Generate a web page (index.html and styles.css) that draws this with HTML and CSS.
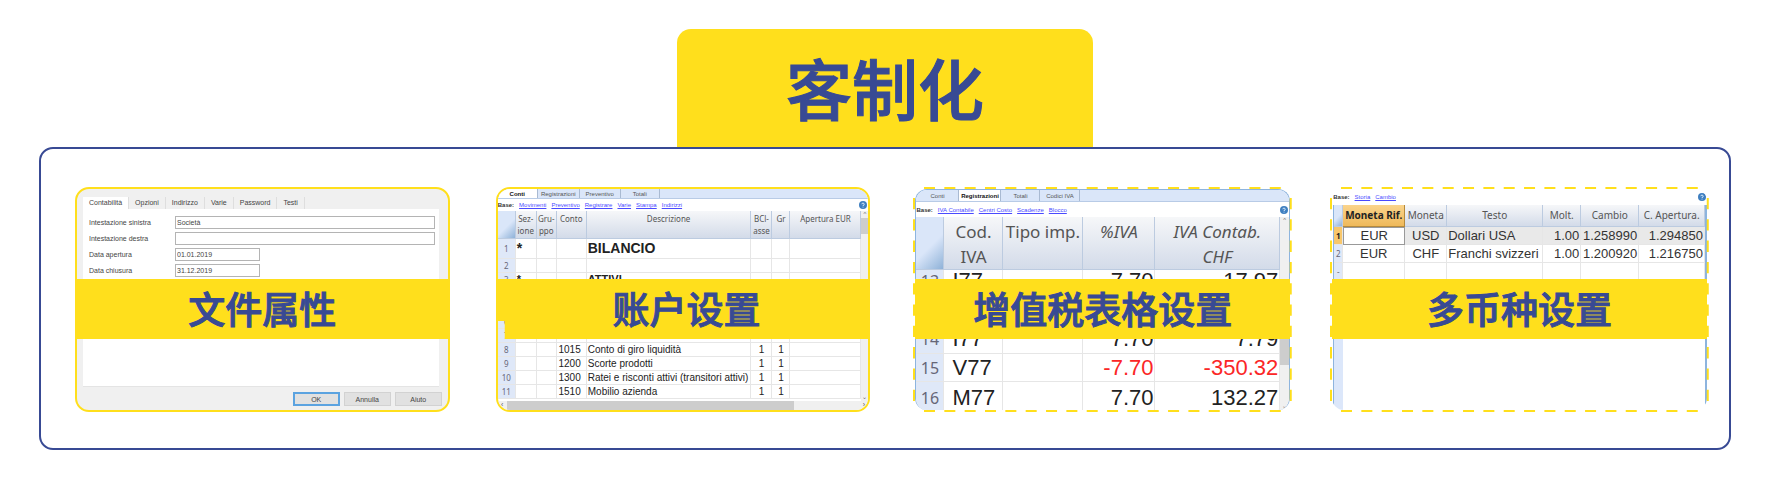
FILE: index.html
```
<!DOCTYPE html>
<html lang="zh-CN">
<head>
<meta charset="utf-8">
<meta name="viewport" content="width=device-width, initial-scale=1">
<title>客制化</title>
<link rel="stylesheet" href="styles.css">
</head>
<body>
<main class="page">
  <h1 class="title">客制化</h1>
  <div class="frame">

    <section class="card card--solid card--first">
      <div class="shot dialog">
        <nav class="dialog-tabs">
          <button class="dtab dtab--on" type="button">Contabilità</button>
          <button class="dtab" type="button">Opzioni</button>
          <button class="dtab" type="button">Indirizzo</button>
          <button class="dtab" type="button">Varie</button>
          <button class="dtab" type="button">Password</button>
          <button class="dtab" type="button">Testi</button>
        </nav>
        <form class="dialog-panel">
          <div class="field"><label for="f1">Intestazione sinistra</label><input id="f1" type="text" value="Società"></div>
          <div class="field"><label for="f2">Intestazione destra</label><input id="f2" type="text"></div>
          <div class="field field--short"><label for="f3">Data apertura</label><input id="f3" type="text" value="01.01.2019"></div>
          <div class="field field--short"><label for="f4">Data chiusura</label><input id="f4" type="text" value="31.12.2019"></div>
        </form>
        <div class="dialog-actions">
          <button class="btn btn--main" type="button">OK</button>
          <button class="btn" type="button">Annulla</button>
          <button class="btn" type="button">Aiuto</button>
        </div>
      </div>
      <h2 class="band">文件属性</h2>
    </section>

    <section class="card card--solid card--second">
      <div class="shot app">
        <nav class="tabs tabs--accounts">
          <button class="tab tab--on" type="button">Conti</button>
          <button class="tab" type="button">Registrazioni</button>
          <button class="tab" type="button">Preventivo</button>
          <button class="tab" type="button">Totali</button>
        </nav>
        <div class="links links--short">
          <b>Base:</b><a href="#">Movimenti</a><a href="#">Preventivo</a><a href="#">Registrare</a><a href="#">Varie</a><a href="#">Stampa</a><a href="#">Indirizzi</a>
          <svg class="help" viewBox="0 0 8 8"><circle cx="4" cy="4" r="4" fill="#3f7fc0"/><path d="M2.8 3.2a1.2 1.2 0 1 1 1.2 1.3v.6M4 5.8v.7" fill="none" stroke="#d8ebfa"/></svg>
        </div>
        <div class="sheet">
          <table class="grid accounts">
            <colgroup><col class="a0"><col class="a1"><col class="a2"><col class="a3"><col><col class="a5"><col class="a6"><col class="a7"></colgroup>
            <thead><tr><th class="corner"></th><th>Sez-<br>ione</th><th>Gru-<br>ppo</th><th>Conto</th><th>Descrizione</th><th>BCl-<br>asse</th><th>Gr</th><th>Apertura EUR</th></tr></thead>
            <tbody>
              <tr class="big"><th>1</th><td>*</td><td></td><td></td><td>BILANCIO</td><td></td><td></td><td></td></tr>
              <tr><th>2</th><td></td><td></td><td></td><td></td><td></td><td></td><td></td></tr>
              <tr class="strong"><th>3</th><td>*</td><td></td><td></td><td>ATTIVI</td><td></td><td></td><td></td></tr>
              <tr><th></th><td></td><td></td><td></td><td></td><td></td><td></td><td></td></tr>
              <tr><th></th><td></td><td></td><td></td><td></td><td></td><td></td><td></td></tr>
              <tr><th>6</th><td></td><td></td><td></td><td></td><td></td><td></td><td></td></tr>
              <tr><th>7</th><td></td><td></td><td class="num">1010</td><td>C/c bancario</td><td class="mid">1</td><td class="mid">1</td><td class="num">3'400.00</td></tr>
              <tr><th>8</th><td></td><td></td><td class="num">1015</td><td>Conto di giro liquidità</td><td class="mid">1</td><td class="mid">1</td><td></td></tr>
              <tr><th>9</th><td></td><td></td><td class="num">1200</td><td>Scorte prodotti</td><td class="mid">1</td><td class="mid">1</td><td></td></tr>
              <tr><th>10</th><td></td><td></td><td class="num">1300</td><td>Ratei e risconti attivi (transitori attivi)</td><td class="mid">1</td><td class="mid">1</td><td></td></tr>
              <tr><th>11</th><td></td><td></td><td class="num">1510</td><td>Mobilio azienda</td><td class="mid">1</td><td class="mid">1</td><td></td></tr>
            </tbody>
          </table>
          <div class="vbar"><span>^</span><i></i><span class="vbar-end">⌄</span></div>
        </div>
        <div class="hbar"><span>‹</span><i></i><span class="hbar-end">›</span></div>
      </div>
      <h2 class="band band--notch">账户设置</h2>
    </section>

    <section class="card card--dashed">
      <div class="shot app app--blue">
        <nav class="tabs tabs--vat">
          <button class="tab" type="button">Conti</button>
          <button class="tab tab--on" type="button">Registrazioni</button>
          <button class="tab" type="button">Totali</button>
          <button class="tab" type="button">Codici IVA</button>
        </nav>
        <div class="links links--tall">
          <b>Base:</b><a href="#">IVA Contabile</a><a href="#">Centri Costo</a><a href="#">Scadenze</a><a href="#">Blocco</a>
          <svg class="help" viewBox="0 0 8 8"><circle cx="4" cy="4" r="4" fill="#3f7fc0"/><path d="M2.8 3.2a1.2 1.2 0 1 1 1.2 1.3v.6M4 5.8v.7" fill="none" stroke="#d8ebfa"/></svg>
        </div>
        <div class="sheet">
          <table class="grid vat">
            <colgroup><col class="v0"><col class="v1"><col class="v2"><col class="v3"><col></colgroup>
            <thead><tr><th class="corner"></th><th>Cod.<br>IVA</th><th>Tipo imp.</th><th><em>%IVA</em></th><th><em>IVA Contab.<br>CHF</em></th></tr></thead>
            <tbody>
              <tr class="row-top"><th>13</th><td>I77</td><td></td><td class="num">7.70</td><td class="num">17.97</td></tr>
              <tr class="row-bottom"><th>14</th><td>I77</td><td></td><td class="num">7.70</td><td class="num">7.79</td></tr>
              <tr><th>15</th><td>V77</td><td></td><td class="num neg">-7.70</td><td class="num neg">-350.32</td></tr>
              <tr class="row-last"><th>16</th><td>M77</td><td></td><td class="num">7.70</td><td class="num">132.27</td></tr>
            </tbody>
          </table>
          <div class="vbar vbar--low"><span>^</span><i></i><span class="vbar-end">⌄</span></div>
        </div>
      </div>
      <svg class="dashes" viewBox="0 0 379 225" preserveAspectRatio="none">
        <path d="M11 1H368" pathLength="1070"/><path d="M11 224H368" pathLength="1070"/>
        <path class="side" d="M1 11V214" pathLength="610"/><path class="side" d="M378 11V214" pathLength="610"/>
      </svg>
      <h2 class="band">增值税表格设置</h2>
    </section>

    <section class="card card--dashed">
      <div class="shot app app--currency">
        <div class="links">
          <b>Base:</b><a href="#">Storia</a><a href="#">Cambio</a>
          <svg class="help" viewBox="0 0 8 8"><circle cx="4" cy="4" r="4" fill="#3f7fc0"/><path d="M2.8 3.2a1.2 1.2 0 1 1 1.2 1.3v.6M4 5.8v.7" fill="none" stroke="#d8ebfa"/></svg>
        </div>
        <div class="sheet sheet--sides">
          <table class="grid currency">
            <colgroup><col class="c0"><col class="c1"><col class="c2"><col class="c3"><col class="c4"><col class="c5"><col></colgroup>
            <thead><tr><th class="corner"></th><th class="picked">Moneta Rif.</th><th>Moneta</th><th>Testo</th><th>Molt.</th><th>Cambio</th><th>C. Apertura.</th></tr></thead>
            <tbody>
              <tr class="current"><th>1</th><td class="mid cell-on">EUR</td><td class="mid">USD</td><td>Dollari USA</td><td class="num">1.00</td><td class="num">1.258990</td><td class="num">1.294850</td></tr>
              <tr><th>2</th><td class="mid">EUR</td><td class="mid">CHF</td><td>Franchi svizzeri</td><td class="num">1.00</td><td class="num">1.200920</td><td class="num">1.216750</td></tr>
              <tr><th>-</th><td></td><td></td><td></td><td></td><td></td><td></td></tr>
            </tbody>
          </table>
        </div>
      </div>
      <svg class="dashes" viewBox="0 0 379 225" preserveAspectRatio="none">
        <path d="M11 1H368" pathLength="1070"/><path d="M11 224H368" pathLength="1070"/>
        <path class="side" d="M1 11V214" pathLength="610"/><path class="side" d="M378 11V214" pathLength="610"/>
      </svg>
      <h2 class="band">多币种设置</h2>
    </section>

  </div>
</main>
</body>
</html>
```

FILE: styles.css
```
:root {
  --yellow: #ffdf1c;
  --blue: #384a94;
  --sans: "Liberation Sans", "Noto Sans CJK SC", sans-serif;
  --ui: "Noto Sans", "Noto Sans CJK SC", sans-serif;
}
* { box-sizing: border-box; }
body { margin: 0; background: #fff; font-family: var(--sans); color: #222; }
button, input { font: inherit; color: inherit; margin: 0; padding: 0; border: 0; background: none; }

.page { padding: 29px 39px 28px; }
.title {
  width: 416px; max-width: 100%; height: 118px; margin: 0 auto;
  border-radius: 14px 14px 0 0; background: var(--yellow); color: var(--blue);
  font: 500 66px/114px "Noto Sans CJK SC", sans-serif; text-align: center;
  -webkit-text-stroke: 1px var(--blue);
}
.frame {
  display: grid; grid-template-columns: 383fr 380fr 379fr 379fr; column-gap: 38px;
  padding: 38px 20px 36px 34px; border: 2px solid var(--blue); border-radius: 14px;
}

.card { position: relative; height: 225px; }
.card--first { margin-right: 8px; }
.card--second { margin-right: 5px; }
.shot { height: 100%; overflow: hidden; display: flex; flex-direction: column; }
.card--solid .shot { border: 2px solid var(--yellow); border-radius: 14px; }
.card--dashed { padding: 2px; }
.card--dashed .shot { border-radius: 12px; }
.dashes { position: absolute; inset: 0; width: 100%; height: 100%; fill: none; stroke: var(--yellow); stroke-width: 2; stroke-dasharray: 33 28; pointer-events: none; }
.dashes .side { stroke-dasharray: 34 30; }

.band {
  position: absolute; left: 0; right: 0; top: 92px; height: 60px; margin: 0;
  background: var(--yellow); color: var(--blue);
  font: 500 37px/58px "Noto Sans CJK SC", sans-serif; text-align: center;
  -webkit-text-stroke: 1px var(--blue);
}
.card--dashed .band { left: 2px; right: 2px; }
.band--notch { padding-left: 7px; clip-path: polygon(0 0, 100% 0, 100% 100%, 9px 100%, 9px 42px, 0 42px); }

/* file properties dialog */
.dialog { background: #f0f0f0; padding: 8px 6px 4px 6px; font-size: 7px; color: #444; }
.dialog-tabs { display: flex; height: 12px; }
.dtab { padding: 0 6px; border-right: 1px solid #dedede; line-height: 12px; }
.dtab--on { background: #fff; }
.dialog-panel { flex: 1; background: #fff; margin-right: 3px; padding: 7px 4px 0 6px; border-bottom: 1px solid #e4e4e4; }
.field { display: grid; grid-template-columns: 86px 1fr; align-items: center; margin-bottom: 3px; }
.field input { width: 100%; height: 13px; padding-left: 1px; border: 1px solid #b4b4b4; background: #fff; }
.field--short input { width: 85px; }
.dialog-actions { display: flex; justify-content: flex-end; gap: 4px; padding-top: 5px; }
.btn { width: 47px; height: 14px; background: #e1e1e1; border: 1px solid #d2d2d2; }
.btn--main { border: 2px solid #5ba3e0; }

/* spreadsheet window */
.app { background: #fff; }
.tabs { display: grid; background: #dae6f9; border-bottom: 1px solid #b8cbe6; font-size: 6px; line-height: 8px; color: #555; }
.tabs--accounts { grid-template-columns: 40px 42px 41px 39px; height: 10px; }
.tabs--vat { grid-template-columns: 43px 42px 39px 40px; height: 12px; }
.tab { border-right: 1px solid #a9bad2; text-align: center; }
.tab--on { background: #fff; color: #111; font-weight: 700; }
.links { display: flex; align-items: center; gap: 5px; height: 13px; font-size: 6px; color: #333; }
.links--short { height: 12px; }
.links--tall { height: 15px; }
.links a { color: #4a4aff; }
.help { width: 8px; height: 8px; margin-left: auto; margin-right: 1px; }
.sheet { flex: 1; display: flex; min-height: 0; overflow: hidden; }
.sheet .grid { flex: 1; min-width: 0; }

.grid { border-collapse: separate; border-spacing: 0; table-layout: fixed; width: 100%; }
.grid th, .grid td { padding: 0 1px; border-right: 1px solid #e6e6e6; border-bottom: 1px solid #e6e6e6; white-space: nowrap; overflow: hidden; text-align: left; }
.grid thead th { padding: 0; vertical-align: top; text-align: center; font-family: var(--ui); font-weight: 400; color: #555; background: linear-gradient(#f6f7f9, #d3dbe9); border-color: #bccbe0; }
.grid thead .corner { background: linear-gradient(135deg, #dae6f9 55%, #8fb2d8); }
.grid tbody th { background: #dfe8f8; color: #667; font-family: var(--ui); font-weight: 400; text-align: center; }
.grid .num { text-align: right; }
.grid .mid { text-align: center; }
.grid .neg { color: #fb2626; }

.accounts { font-size: 10px; line-height: 13px; height: 188px; }
.accounts thead th { font-size: 8px; line-height: 12px; height: 28px; padding-top: 2px; }
.accounts tbody th { font-size: 8px; }
.accounts tbody tr { height: 14px; }
.accounts tbody .big { height: 20px; font-size: 14px; font-weight: 700; }
.accounts .strong { font-size: 11px; font-weight: 700; }
.accounts tbody .num { padding-right: 5px; }
.a0 { width: 18px; } .a1 { width: 21px; } .a2 { width: 20px; } .a3 { width: 30px; }
.a5 { width: 21px; } .a6 { width: 18px; } .a7 { width: 71px; }

.vat { font-size: 22px; line-height: 22px; }
.vat thead th { height: 53px; font-size: 17px; line-height: 25px; padding-top: 2px; }
.vat tbody td { padding-left: 8px; }
.vat tbody th { font-size: 16px; }
.vat tbody tr { height: 28px; }
.vat .row-top > * { vertical-align: top; }
.vat .row-bottom { height: 56px; }
.vat .row-bottom > * { vertical-align: bottom; padding-bottom: 3px; }
.vat .row-last { height: 32px; }
.v0 { width: 28px; } .v1 { width: 59px; } .v2 { width: 80px; } .v3 { width: 72px; }

.currency { font-size: 13px; line-height: 17px; color: #333; align-self: flex-start; }
.currency thead th { height: 22px; font-size: 10px; line-height: 20px; }
.currency tbody th { font-size: 8px; }
.currency tbody tr { height: 18px; }
.currency .current td { background: #e9e9e9; }
.currency .current .cell-on { background: #fff; border: 1px solid #999; line-height: 16px; }
.currency .current th, .grid thead .picked { background: #f8c76b; color: #222; font-weight: 700; }
.grid thead .picked { background: linear-gradient(#fad48c, #efb95a); border-color: #b58a3c; }
.c0 { width: 9px; } .c1 { width: 62px; } .c2 { width: 42px; } .c3 { width: 96px; } .c4 { width: 38px; } .c5 { width: 58px; }

.app--blue { border: 1px solid #8db4de; border-bottom: 0; }
.app--currency { padding-left: 1px; }
.app--currency .links { height: 16px; }
.sheet--sides { border-left: 1px solid #8db4de; border-right: 2px solid #8db4de; background: linear-gradient(90deg, #dce7fa 9px, #fff 9px); }

.vbar { width: 7px; display: flex; flex-direction: column; background: #f0f0f0; font-size: 6px; line-height: 7px; text-align: center; color: #666; }
.vbar i { height: 16px; background: #cdcdcd; }
.vbar-end { margin-top: auto; }
.vbar--low { width: 9px; }
.vbar--low i { height: 40px; margin-top: 101px; }
.hbar { display: flex; height: 9px; background: #f0f0f0; font-size: 7px; line-height: 8px; color: #555; }
.hbar span { width: 9px; text-align: center; }
.hbar i { width: 287px; background: #cdcdcd; }
.hbar-end { margin-left: auto; }
```
